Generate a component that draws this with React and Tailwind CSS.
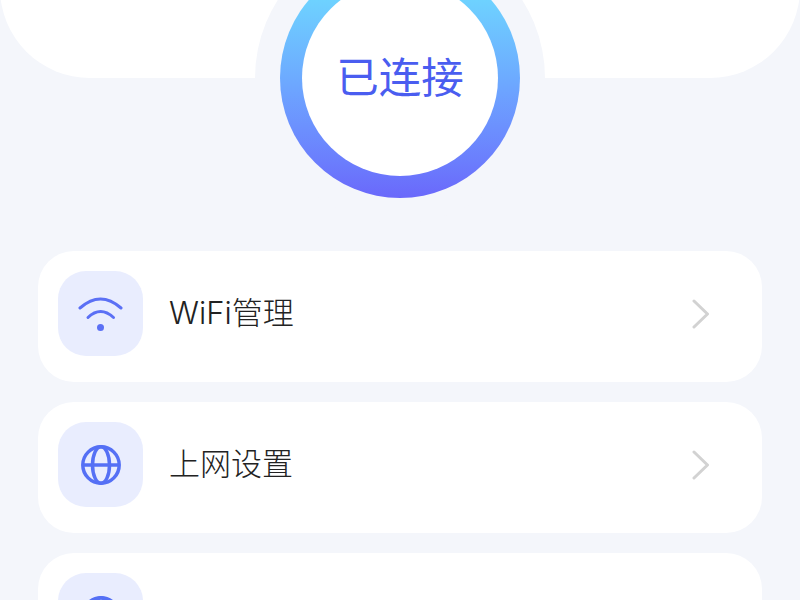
import React from 'react';

const WifiIcon = () => (
  <svg width="48" height="48" viewBox="0 0 48 48" fill="none" stroke="#5b70f5" strokeLinecap="round" strokeWidth="3">
    <path d="M3 18Q23.5 0 44 18" />
    <path d="M11 27.5Q23.5 15.5 36.5 27.5" />
    <circle cx="23.5" cy="37.5" r="3.5" fill="#5b70f5" stroke="none" />
  </svg>
);

const GlobeIcon = () => (
  <svg width="42" height="42" viewBox="0 0 42 42" fill="none" stroke="#5570f5" strokeWidth="3.5">
    <circle cx="21" cy="21" r="18.2" />
    <ellipse cx="21" cy="21" rx="8.5" ry="18.2" />
    <path d="M3 21H39" />
  </svg>
);

const Chevron = () => (
  <svg width="18" height="30" viewBox="0 0 18 30" fill="none" stroke="#d2d2d2" strokeLinecap="round" strokeLinejoin="round" strokeWidth="3">
    <path d="M2 2L15.5 15L2 28" />
  </svg>
);

const menuItems = [
  { title: 'WiFi管理', icon: <WifiIcon /> },
  { title: '上网设置', icon: <GlobeIcon /> },
  { title: '路由设置', icon: <GlobeIcon /> },
];

const MenuRow = ({ title, icon }) => (
  <div className="h-[131px] shrink-0 rounded-[36px] bg-white pl-5 pr-[52px] pt-5">
    <div className="flex items-center">
      <div className="flex h-[85px] w-[85px] items-center justify-center rounded-[28px] bg-[#e9edfe]">{icon}</div>
      <span className="mb-[2px] ml-[26px] flex-1 text-[31px] font-light leading-none text-[#222222]">{title}</span>
      <Chevron />
    </div>
  </div>
);

export default function App() {
  return (
    <div className="relative h-[600px] w-[800px] overflow-hidden bg-[#f4f6fb] font-['Inter','Noto_Sans_CJK_SC',sans-serif]">
      <div className="-mt-[22px] h-[100px] rounded-b-[90px] bg-white" />

      {/* status ring sits over the header edge */}
      <div className="absolute left-[255px] top-[-67px] flex h-[290px] w-[290px] items-center justify-center rounded-full bg-[#f4f6fb]">
        <div className="flex h-[240px] w-[240px] items-center justify-center rounded-full bg-gradient-to-b from-[#6ee7ff] to-[#6a68fb]">
          <div className="flex h-[196px] w-[196px] items-center justify-center rounded-full bg-white">
            <span className="text-[42.5px] font-normal leading-none text-[#4a5df0]">已连接</span>
          </div>
        </div>
      </div>

      <div className="mt-[173px] flex flex-col gap-5 px-[38px]">
        {menuItems.map((item) => (
          <MenuRow key={item.title} title={item.title} icon={item.icon} />
        ))}
      </div>
    </div>
  );
}
